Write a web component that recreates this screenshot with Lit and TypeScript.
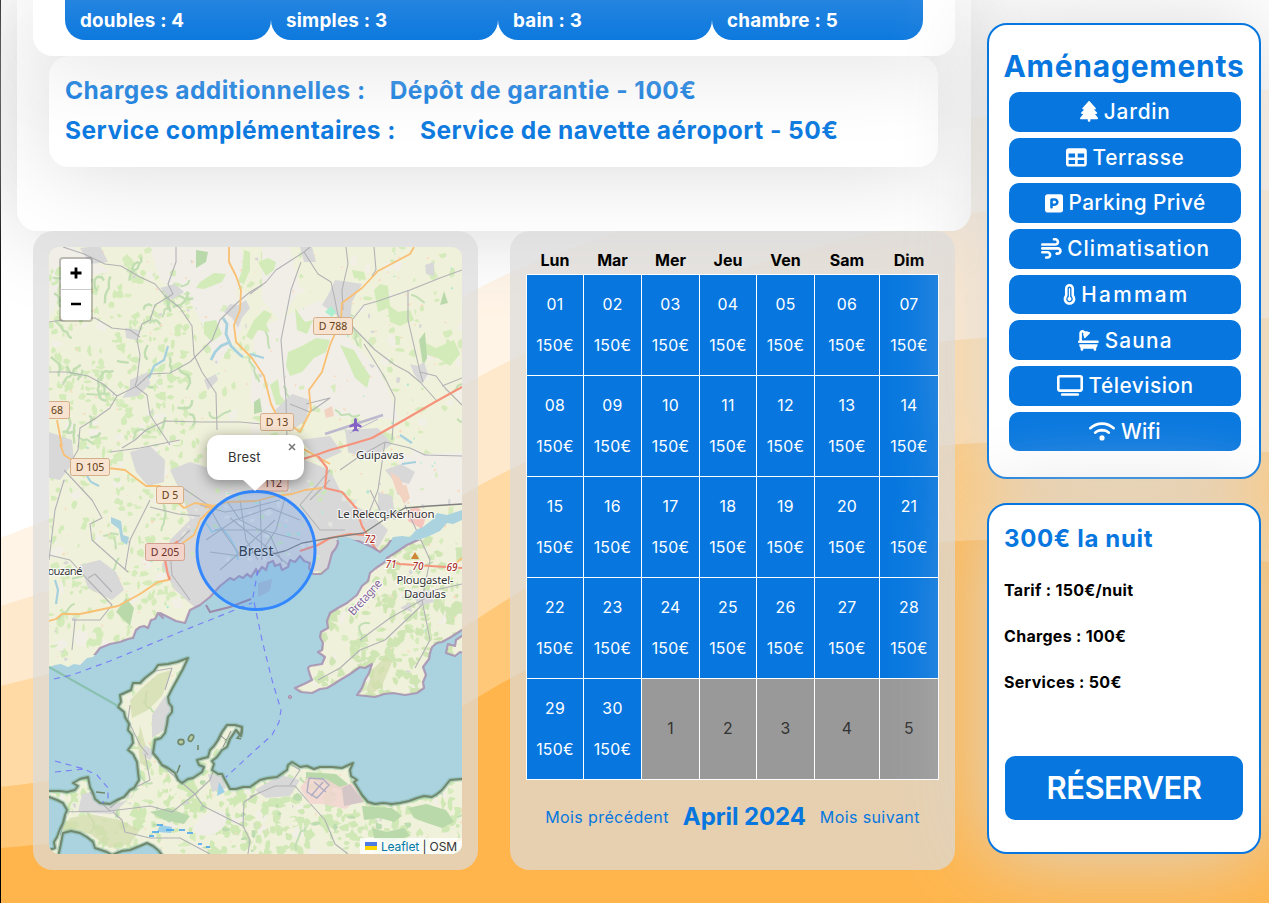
import { LitElement, html, svg, css } from "lit";
import { customElement, property } from "lit/decorators.js";

const ICONS: Record<string, [number, string]> = {
  tree: [448, "M210.6 5.9L62 169.4c-3.9 4.2-6 9.8-6 15.5C56 197.7 66.3 208 79.1 208H104L30.6 281.4c-4.2 4.2-6.6 10-6.6 16C24 309.9 34.1 320 46.6 320H80L5.4 409.5C1.9 413.7 0 419 0 424.5c0 13 10.5 23.5 23.5 23.5H192v32c0 17.7 14.3 32 32 32s32-14.3 32-32V448H424.5c13 0 23.5-10.5 23.5-23.5c0-5.5-1.9-10.8-5.4-15L368 320h33.4c12.5 0 22.6-10.1 22.6-22.6c0-6-2.4-11.8-6.6-16L344 208h24.9c12.7 0 23.1-10.3 23.1-23.1c0-5.7-2.1-11.3-6-15.5L237.4 5.9C234 2.1 229.1 0 224 0s-10 2.1-13.4 5.9z"],
  table: [512, "M64 256V160H224v96H64zm0 64H224v96H64V320zm224 96V320H448v96H288zM448 256H288V160H448v96zM64 32C28.7 32 0 60.7 0 96V416c0 35.3 28.7 64 64 64H448c35.3 0 64-28.7 64-64V96c0-35.3-28.7-64-64-64H64z"],
  parking: [448, "M64 32C28.7 32 0 60.7 0 96V416c0 35.3 28.7 64 64 64H384c35.3 0 64-28.7 64-64V96c0-35.3-28.7-64-64-64H64zM192 256h48c17.7 0 32-14.3 32-32s-14.3-32-32-32H192v64zm48 64H192v32c0 17.7-14.3 32-32 32s-32-14.3-32-32V288 168c0-22.1 17.9-40 40-40h72c53 0 96 43 96 96s-43 96-96 96z"],
  wind: [512, "M288 32c0 17.7 14.3 32 32 32h32c17.7 0 32 14.3 32 32s-14.3 32-32 32H32c-17.7 0-32 14.3-32 32s14.3 32 32 32H352c53 0 96-43 96-96s-43-96-96-96H320c-17.7 0-32 14.3-32 32zm64 352c0 17.7 14.3 32 32 32h32c53 0 96-43 96-96s-43-96-96-96H32c-17.7 0-32 14.3-32 32s14.3 32 32 32H416c17.7 0 32 14.3 32 32s-14.3 32-32 32H384c-17.7 0-32 14.3-32 32zM128 512h32c53 0 96-43 96-96s-43-96-96-96H32c-17.7 0-32 14.3-32 32s14.3 32 32 32H160c17.7 0 32 14.3 32 32s-14.3 32-32 32H128c-17.7 0-32 14.3-32 32s14.3 32 32 32z"],
  temp: [320, "M160 64c-26.5 0-48 21.5-48 48V276.5c0 17.3-7.1 31.9-15.3 42.5C86.2 332.6 80 349.5 80 368c0 44.2 35.8 80 80 80s80-35.8 80-80c0-18.5-6.2-35.4-16.7-48.9c-8.2-10.6-15.3-25.2-15.3-42.5V112c0-26.5-21.5-48-48-48zM48 112C48 50.2 98.1 0 160 0s112 50.1 112 112V276.5c0 .1 .1 .3 .2 .6c.2 .6 .8 1.6 1.7 2.8c18.9 24.4 30.1 55 30.1 88.1c0 79.5-64.5 144-144 144S16 447.5 16 368c0-33.2 11.2-63.8 30.1-88.1c.9-1.2 1.5-2.2 1.7-2.8c.1-.3 .2-.5 .2-.6V112zM208 368c0 26.5-21.5 48-48 48s-48-21.5-48-48c0-20.9 13.4-38.7 32-45.3V112c0-8.8 7.2-16 16-16s16 7.2 16 16V322.7c18.6 6.6 32 24.4 32 45.3z"],
  bath: [512, "M96 77.3c0-7.3 5.9-13.3 13.3-13.3c3.5 0 6.9 1.4 9.4 3.9l14.9 14.9C130 91.8 128 101.7 128 112c0 19.9 7.2 38 19.2 52c-5.3 9.2-4 21.1 3.8 29c9.4 9.4 24.6 9.4 33.9 0L289 89c9.4-9.4 9.4-24.6 0-33.9c-7.9-7.9-19.8-9.1-29-3.8C246 39.2 227.9 32 208 32c-10.3 0-20.2 2-29.2 5.5L163.9 22.6C149.4 8.1 129.7 0 109.3 0C66.6 0 32 34.6 32 77.3V256c-17.7 0-32 14.3-32 32s14.3 32 32 32H480c17.7 0 32-14.3 32-32s-14.3-32-32-32H96V77.3zM32 352v16c0 28.4 12.4 54 32 71.6V480c0 17.7 14.3 32 32 32s32-14.3 32-32V464H384v16c0 17.7 14.3 32 32 32s32-14.3 32-32V439.6c19.6-17.6 32-43.1 32-71.6V352H32z"],
  tv: [640, "M64 64V352H576V64H64zM0 64C0 28.7 28.7 0 64 0H576c35.3 0 64 28.7 64 64V352c0 35.3-28.7 64-64 64H64c-35.3 0-64-28.7-64-64V64zM128 448H512c17.7 0 32 14.3 32 32s-14.3 32-32 32H128c-17.7 0-32-14.3-32-32s14.3-32 32-32z"],
  wifi: [640, "M54.2 202.9C123.2 136.7 216.8 96 320 96s196.8 40.7 265.8 106.9c12.8 12.2 33 11.8 45.2-.9s11.8-33-.9-45.2C549.7 79.5 440.4 32 320 32S90.3 79.5 9.8 156.7C-2.9 169-3.3 189.2 8.9 202s32.5 13.2 45.2 .9zM320 256c56.8 0 108.6 21.1 148.2 56c13.3 11.7 33.5 10.4 45.2-2.8s10.4-33.5-2.8-45.2C459.8 219.2 393 192 320 192s-139.8 27.2-190.5 72c-13.3 11.7-14.5 31.9-2.8 45.2s31.9 14.5 45.2 2.8c39.5-34.9 91.3-56 148.2-56zm64 160a64 64 0 1 0 -128 0 64 64 0 1 0 128 0z"],
};

const PLANE = "M482.3 192c34.2 0 93.7 29 93.7 64c0 36-59.5 64-93.7 64l-116.6 0L265.2 495.9c-5.7 10-16.3 16.1-27.8 16.1l-56.2 0c-10.6 0-18.3-10.2-15.4-20.4l49-171.6L112 320 68.8 377.6c-3 4-7.8 6.4-12.8 6.4l-42 0c-7.8 0-14-6.3-14-14c0-1.3 .2-2.6 .5-3.9L32 256 .5 145.9c-.4-1.3-.5-2.6-.5-3.9c0-7.8 6.3-14 14-14l42 0c5 0 9.8 2.4 12.8 6.4L112 192l102.9 0-49-171.6C162.9 10.2 170.6 0 181.2 0l56.2 0c11.5 0 22.1 6.2 27.8 16.1L365.7 192l116.6 0z";

/* ---------- terrain texture ---------- */

function seeded(seed: number) {
  let s = seed;
  return () => {
    s = (s * 1664525 + 1013904223) % 4294967296;
    return s / 4294967296;
  };
}

type Box = [number, number, number, number];

// Scatters small irregular parcels inside a box and returns them as one path.
function parcels(seed: number, count: number, size: number, [x0, y0, x1, y1]: Box): string {
  const r = seeded(seed);
  let d = "";
  for (let i = 0; i < count; i++) {
    const cx = x0 + r() * (x1 - x0);
    const cy = y0 + r() * (y1 - y0);
    const n = 5 + Math.floor(r() * 4);
    const sx = size * (0.4 + r());
    const sy = size * (0.4 + r());
    for (let k = 0; k < n; k++) {
      const a = (k / n) * Math.PI * 2;
      const m = 0.45 + r() * 0.75;
      d += `${k ? "L" : "M"}${(cx + Math.cos(a) * sx * m).toFixed(1)} ${(cy + Math.sin(a) * sy * m).toFixed(1)}`;
    }
    d += "z";
  }
  return d;
}

// Winding hedgerow-like strips of woodland.
function strips(seed: number, count: number, [x0, y0, x1, y1]: Box): string {
  const r = seeded(seed);
  let d = "";
  for (let i = 0; i < count; i++) {
    let x = x0 + r() * (x1 - x0);
    let y = y0 + r() * (y1 - y0);
    let a = r() * 6.28;
    d += `M${x.toFixed(1)} ${y.toFixed(1)}`;
    const n = 3 + Math.floor(r() * 5);
    for (let k = 0; k < n; k++) {
      a += (r() - 0.5) * 1.8;
      x += Math.cos(a) * 4;
      y += Math.sin(a) * 4;
      d += `L${x.toFixed(1)} ${y.toFixed(1)}`;
    }
  }
  return d;
}

const ALL: Box = [49, 247, 462, 854];
const NORTHWEST: Box = [49, 270, 190, 440];
const WEST: Box = [49, 440, 200, 660];
const SOUTH: Box = [49, 740, 462, 854];
const EAST: Box = [320, 540, 462, 700];
const CITY: Box = [180, 470, 370, 560];

const SEA =
  "M40 667L49 667 55 665 61 664 68 667 74 664 80 665 87 658 93 657 100 648 110 644 120 642 128 639 133 638 136 630 140 627 144 626 148 628 151 620 155 619 158 613 163 618 160 613 168 617 176 621 185 623 188 615 190 610 200 605 210 597 220 586 230 578 234 580 239 576 243 578 247 574 251 577 256 569 257 574 262 567 266 570 268 563 273 561 275 566 280 564 282 570 288 567 290 560 295 562 300 556 304 561 310 563 309 568 313 574 321 574 328 568 332 553 336 548 338 543 337 538 347 537 356 540 363 543 372 547 380 552 387 546 393 537 402 536 410 537 416 530 423 527 432 520 437 513 447 515 462 510 470 510 470 520 462 520 453 524 447 523 440 531 427 537 418 540 407 545 395 553 387 558 385 562 376 568 370 573 368 581 362 586 357 595 347 603 338 608 330 613 327 621 328 628 321 632 320 637 323 643 322 650 318 652 325 657 322 664 310 666 308 668 310 675 312 680 304 684 295 688 301 692 312 693 320 689 327 688 334 684 340 680 350 674 360 667 365 668 372 664 369 673 365 680 362 688 357 695 366 696 375 697 384 694 393 693 405 695 417 693 424 688 423 682 426 675 423 667 429 659 430 653 432 647 437 643 442 642 451 637 462 630 470 630 470 638 462 636 456 640 455 646 448 644 446 653 455 656 460 652 470 655 470 779 462 779 450 780 442 790 437 794 432 797 424 796 417 798 409 801 400 803 392 804 383 803 375 804 368 802 362 795 357 787 354 782 357 780 351 776 350 770 353 763 342 768 332 767 320 767 314 769 307 766 300 767 292 762 288 765 287 770 277 777 268 778 260 780 250 787 243 787 236 789 230 789 225 780 222 774 218 774 212 770 214 764 212 761 217 757 222 750 227 747 230 739 236 730 241 736 242 727 235 725 227 725 222 732 218 740 214 746 210 750 208 757 197 760 199 765 204 767 202 772 193 778 188 779 182 783 178 780 175 773 168 768 162 765 158 759 153 753 155 740 161 738 165 733 167 724 168 717 172 712 172 707 169 703 168 697 172 689 178 678 183 669 188 658 177 662 168 664 158 665 154 671 145 678 140 683 133 683 131 690 120 695 121 702 118 707 124 712 125 717 129 724 128 730 132 735 133 743 128 750 133 754 137 762 138 772 139 780 134 788 130 790 124 797 117 800 110 804 100 803 95 799 93 793 90 787 88 777 80 779 73 783 78 786 75 790 67 792 60 791 49 791 40 791z";
const BAY_W = "M40 798L49 797 57 800 63 803 67 810 65 815 63 823 60 829 57 837 54 842 55 848 49 850 40 850z";
const BAY_S = "M57 862L60 848 63 833 71 831 80 833 87 837 93 842 95 848 107 852 112 855 122 851 130 850 140 846 147 843 153 846 158 850 166 860z";

const URBAN = [
  "M170 470L190 462 215 470 235 462 262 472 300 458 330 470 345 500 372 515 388 530 378 548 340 540 330 570 280 575 240 588 200 612 175 590 162 566 170 540 190 520 182 495z",
  "M80 248L100 246 108 262 90 264z", "M160 288L175 284 184 292 172 300z", "M125 328L140 330 136 340 126 338z",
  "M224 312L230 304 238 305 246 300 250 308 242 318 238 328 232 318z", "M130 380L148 372 150 384 138 396 122 398 130 388z", "M204 380L216 374 218 380 208 390z",
  "M328 295L335 280 350 282 362 284 352 302 350 322 338 316 322 305z", "M300 247L312 247 316 262 304 262z", "M425 265L434 262 434 276 426 274z",
  "M410 364L418 366 424 362 428 374 422 384 414 374z", "M275 410L292 394 310 400 306 420 290 432 276 424z",
  "M49 432L72 440 74 462 60 480 49 478z", "M130 452L150 446 165 460 164 482 148 486 136 472z", "M80 565L100 560 116 572 124 590 112 600 88 588z",
  "M345 430L378 428 392 444 370 460 348 452z", "M300 440L330 436 342 452 320 462z", "M378 492L392 496 396 520 378 516z", "M410 592L430 590 434 602 420 606z",
  "M255 790L280 775 300 780 290 796 266 798z", "M82 794L92 792 106 806 128 800 112 814 78 812z", "M152 715L165 696 172 706 164 730 152 738z",
  "M208 774L222 776 226 788 212 792z", "M145 745L155 752 150 760 142 754z", "M400 608L410 602 412 612z M385 470l16 -6 14 8 -6 12 -16 -4z",
];

const HEATH = [
  "M50 247H74L96 262 110 272 66 280 49 320z", "M150 247H240L250 270 236 292 242 330 216 366 205 330 190 300 160 280z",
  "M255 330L320 300 350 340 380 370 400 420 330 416 300 395 270 430 250 400z", "M262 247L290 247 300 290 280 320 262 300z",
  "M398 455L462 452 462 505 405 505z",
];

const GRASS = [
  "M200 282l14-9 12 1-4 8-10 4-8 3-8-1z", "M254 320l10-10 8 4-6 10 4 8-12-2-6 10-6-4z", "M258 262l10-4 8 4-2 8-8 6z",
  "M374 290l6-6 8 2 2 20 8 6 12-2 4 10-14 6-10-4-2-14-10 4z", "M340 345l14 5 8 14 8 12-3 12-12-10-8-18z",
  "M288 352l14-6 14-8 14 2-4 12-12 6-12 14-12 4-4-10z", "M270 385l8-6 2 16 8 10-12 0z", "M204 322l12-2 6 14-10 8-8-8z",
  "M352 270l12 2 2 8-12-2z", "M244 250l6 2 0 18-6 14-6-2 4-12z", "M420 340l16 8 18-8 6 14-10 12-12-8-14-4z", "M295 308l10 14 8-2-6 14-10-4z",
];

const FOREST = [
  "M196 250l12 2-2 10-10 6z", "M254 402l6-4 2 14-8 2z", "M419 340l6-8 2 26-4 8z", "M150 812l18-4 22 8-6 8-20-4z", "M362 806l30 2 10 8-8 6-14-4-16 2z",
  "M408 808l18-4 20 6 8 12-12 6-18-6-10-4z", "M372 828l14 4 18-4 6 8-20 6-16-4z",
  "M306 772l30 2 12 10-6 6-18-6-18-6z", "M116 612l10-14 8 10-4 18z", "M440 305l4-14 4 12z", "M300 404l8 4-4 18-4-6z",
];

const RESERVE = [
  "M130 700l14-14 14-12 14-4-10 26-14 14-16 8z", "M140 725l6 22 0 20-6-4-2-20z", "M366 690l8-22 12-12 6 6-10 24-10 8z",
  "M60 830l10-12 20-4 30 6 20 10-10 14-20 4-20-14z", "M330 600l12-18 16-14-2 14-14 18z",
];

const ROADS_MINOR = [
  "M63 247L84 254 105 264 121 266 140 277 155 284 165 296 180 308 192 326 194 355 202 372 216 393 217 430",
  "M176 247L176 262 168 284 173 294 155 305 150 320 142 324 137 340 140 355 137 380 135 386",
  "M49 372L67 372 88 376 103 384 117 396", "M117 396L137 386 150 374 170 373 190 362 212 340 220 320 238 302 250 292 262 285",
  "M49 322L75 318 95 318 112 328 130 330 140 337", "M135 386L147 395 150 415 160 430 170 445",
  "M117 396L110 408 96 418 80 428 78 450 72 460", "M122 448L135 440 146 430 165 421 200 422 240 422 262 424",
  "M250 294L266 282 276 270 304 252 310 247", "M304 252L318 274 331 282 335 300 338 316 350 324 375 350 395 365 408 372 420 382 436 400",
  "M301 262L291 290 281 340 286 400 287 440", "M346 247L348 264 342 290 343 310", "M352 320L364 305 378 301 410 290 440 278 462 270",
  "M374 247L376 270 372 276", "M408 290L408 320 420 372 423 382", "M364 344L385 378 395 398 392 440",
  "M420 372L436 376 445 388 462 405", "M306 404L330 398 310 412 290 404", "M442 386L462 378",
  "M64 480L55 510 49 560", "M64 470L92 500 102 518 90 524 92 540 120 565 128 572", "M110 452L140 448 180 440",
  "M150 500L130 540 125 570M150 507L178 514 200 516", "M49 555L70 560 88 580 112 605 100 620 72 620M75 620L72 650",
  "M88 578L95 574 112 592", "M340 470L360 456 385 442 410 448 425 455 462 456M385 442L378 490 366 520",
  "M405 505L430 560 422 600M422 600L390 618 360 640M422 600L435 590 462 584M422 600L430 640 415 668",
  "M318 680L340 668 360 650 385 640 422 605", "M60 812L110 811 150 806 172 812 195 794",
  "M145 754L150 780 130 790 110 808M158 762L195 794 210 780 216 764M195 794L203 806 235 822 243 826 250 840 248 854",
  "M113 812L122 820 125 832 150 838 180 838 210 854M110 811L90 792M66 816L60 835",
  "M250 797L275 786 295 786 307 800 325 820 335 844 348 854M290 785L300 770 290 764M243 826L244 802 260 792",
  "M130 705L128 720 140 745 148 755M150 672L172 668 165 690",
  "M183 488L208 505 222 530 240 555M190 530L170 550 172 575 190 600M200 505L225 512 250 508 280 500",
  "M260 500L262 560M240 500L246 540 258 560M285 498L276 530 264 548M300 540L262 530 215 530M230 518L258 540 290 566M210 552L240 556 262 550",
  "M206 540L235 520 270 508 300 520M220 570L245 548 275 520M282 562L270 535 240 520 225 498",
  "M330 470L300 505 320 530 345 530M310 500L330 480M370 490L380 510",
];
const ROADS_ORANGE = [
  "M229 247L229 262 236 276 241 290 240 310 234 325 236 342 252 358 264 376 271 404 284 430",
  "M414 247L410 254 395 262 378 271 362 288 342 303 341 320 330 345 322 372 309 390 311 410 300 432 284 420",
  "M49 621L56 619 62 614 80 614 118 606 140 594 158 582 168 580 170 576", "M60 444L64 455 72 460M57 420L62 447",
  "M108 468L125 470 146 486 160 486 175 500 184 508 195 503 214 506 200 520 194 535 180 545 170 550",
  "M205 508L228 502 256 501 275 496 292 494 305 490 322 488", "M300 447L330 464", "M440 845L462 839M454 565L462 558",
];
const ROADS_RED = [
  "M462 387L435 402 404 420 372 438 352 444 330 450 316 455 300 460", "M318 456L327 468 325 488 342 492 356 508 362 526 375 548 386 561 400 564 430 566 462 568",
  "M170 552L165 560 168 575 170 580M170 547L178 541", "M300 551L318 545 330 538 350 534 364 535",
];

const SHIELDS: [string, number, number, number, number][] = [
  ["D 788", 333, 326, 38, 0], ["D 13", 277, 422, 32, 0], ["D 105", 90, 467, 38, 0], ["D 5", 170, 495, 26, 0], ["D 205", 165, 552, 38, 1], ["68", 57, 410, 24, 0],
];

@customElement("osm-map")
class OsmMap extends LitElement {
  static styles = css`
    :host { display: block; position: relative; width: 413px; height: 607px; border-radius: 10px; overflow: hidden; font-family: Inter, sans-serif; }
    svg { display: block; }
    .zoom { position: absolute; top: 10px; left: 10px; width: 30px; border: 2px solid rgba(0,0,0,.22); border-radius: 4px; background: #fff; background-clip: padding-box; }
    .zoom button { display: grid; place-items: center; width: 30px; height: 30px; padding: 0 0 2px; border: 0; background: none; }
    .zoom button + button { border-top: 1px solid #ccc; height: 31px; }
    .popup { position: absolute; left: 158px; top: 188px; width: 97px; height: 45px; border-radius: 12px; background: #fff; box-shadow: 0 3px 14px rgba(0,0,0,.4); font-size: 13px; line-height: 44px; color: #333; }
    .popup span { padding-left: 21px; letter-spacing: .15px; }
    .tip { position: absolute; left: 35px; top: 44px; width: 26px; height: 12px; background: #fff; clip-path: polygon(0 0, 100% 0, 50% 100%); }
    .close { position: absolute; right: 8px; top: 8px; width: 8px; height: 8px; }
    .credit { position: absolute; right: 0; bottom: 0; display: flex; align-items: center; height: 16px; padding: 0 5px; background: rgba(255,255,255,.8); font-size: 12px; color: #333; white-space: pre; letter-spacing: -.1px; }
    .credit a { color: #0078a8; }
    .flag { width: 12px; height: 8px; margin-right: 4px; background: linear-gradient(#4c7be1 50%, #ffd500 50%); }
  `;

  render() {
    const road = (d: string) => svg`<path d=${d}/>`;
    return html`
      <svg width="413" height="607" viewBox="49 247 413 607">
        <rect x="49" y="247" width="413" height="607" fill="#f0f1da"/>
        <path d=${parcels(11, 200, 6, ALL)} fill="#f2efe6"/>
        <path d=${parcels(7, 380, 4.5, ALL)} fill="#d5ebbb"/>
        <g fill="#f1eee8">${HEATH.map(road)}</g>
        <path d=${parcels(8, 120, 3.5, ALL)} fill="#d8ecc0"/>
        <path d=${parcels(21, 190, 4, NORTHWEST)} fill="#d3eab9"/>
        <path d=${parcels(23, 160, 4, WEST)} fill="#d3eab9"/>
        <path d=${parcels(25, 420, 5.5, SOUTH)} fill="#cfe8b5"/>
        <path d=${parcels(27, 240, 5, EAST)} fill="#cfe6b4"/>
        <path d=${parcels(29, 170, 4, SOUTH)} fill="#f1f1dc"/>
        <path d=${strips(5, 50, ALL)} fill="none" stroke="#c2dfb4" stroke-width="2"/>
        <path d=${strips(9, 34, NORTHWEST)} fill="none" stroke="#c0deb2" stroke-width="2.4"/>
        <path d=${parcels(31, 50, 4, SOUTH)} fill="#bddcb0"/>
        <path d=${parcels(33, 90, 2.2, ALL)} fill="#d7d7d7"/>
        <path d=${parcels(35, 330, 1.4, ALL)} fill="#f7dcc3"/>
        <path d=${parcels(37, 45, 1.3, ALL)} fill="#b0e8d0"/>
        <g fill="#d2ebb8">${GRASS.map(road)}</g>
        <g fill="#b9d9ab">${FOREST.map(road)}</g>
        <g fill="#d3ddae" opacity=".75">${RESERVE.map(road)}</g>
        <path d="M196 833c-8-6 8-22 22-22 10 0 10 8 6 15-6 9-20 13-28 7z" fill="#f1eee8"/>
        <g fill="#d8d8d8">${URBAN.map(road)}</g>
        <path d=${parcels(41, 45, 3, CITY)} fill="#e3e3df"/>
        <path d=${parcels(43, 34, 2.6, CITY)} fill="#cbe6b8"/>
        <path d=${parcels(45, 20, 2, CITY)} fill="#b4e6d2"/>
        <path d="M325 312l6-6 5 6-4 5z" fill="#abeed0"/>
        <g fill="#f2d3c2"><path d="M324 410l8-4 2 10-8 2zM390 472l10 6 8 18-4 6-8-12zM398 490l8-6 4 14-6 6z"/></g>
        <path d="M406 510l12-3 8 10-4 12-14-8z" fill="#f5c4bc"/>
        <g fill="none" stroke="#a5d1df" stroke-width="2.2">
          <path d="M149 378l5-12 10-6 4-14"/><path d="M223 318l4 6-1 10 5 12 8 8 4 3M230 342l-9 4-6 6-4 8" stroke-width="2.8"/>
          <path d="M250 354l14 4M87 476l4 6 8 4M55 580l3 10-2 14M400 435l12 8M402 464l14-2"/>
          <path d="M204 520l8 12 10-4 8 10 6 12 2 10" stroke-width="1.6"/>
        </g>
        <path d="M111 517l10 4 2 14 6 2-2 8-6-4-2-12-8-6z" fill="#aad3df"/>
        <path d="M160 825l12 2-1 6-14-1zM219 782l6 10-8 4z" fill="#9ccfe8"/>
        <g fill="none" stroke="#b2b2b6" stroke-width="1.1" stroke-linejoin="round">${ROADS_MINOR.map(road)}</g>
        <path d="M325 434l58-19" stroke="#bcb9cf" stroke-width="2.5"/><path d="M350 433l28-14" stroke="#bcb9cf"/>
        <g fill="none" stroke="#f9bf73" stroke-width="1.8" stroke-linejoin="round">${ROADS_ORANGE.map(road)}</g>
        <g fill="none" stroke="#f6937c" stroke-width="2.1" stroke-linejoin="round">${ROADS_RED.map(road)}</g>
        <path d="M269 555L285 551 302 543 330 538 364 533 385 519 405 508 430 506 462 504" fill="none" stroke="#808080" stroke-width="1.3"/>
        <path d="M300 788l8-11 18 2 14 8 12-4 12 18-10 1-8 7-24-5-12 0z" fill="#f2d5d0" opacity=".85"/>
        <path d="M342 788l8-4 14 18-20 4z" fill="#d4c6c6"/>
        <path d="M307 792l2-14 14 1 6 6-12 13zM311 796l12-14M314 782l12 10" fill="none" stroke="#adaec4" stroke-width="1.4"/>

        <clipPath id="pink"><path d="M49 540H470V745H190V655H49z"/></clipPath>
        <clipPath id="green"><path d="M49 676H190V745H470V854H49z M120 655h72v30h-72z M190 715h56v40h-56z"/></clipPath>
        <path d=${SEA} fill="#aad3df"/><path d=${BAY_W + BAY_S} fill="#aad3df"/>
        <path d=${SEA} fill="none" stroke="#a78fb0" stroke-width="2.2" stroke-linejoin="round" opacity=".85" clip-path="url(#pink)"/>
        <g clip-path="url(#green)" fill="none" stroke-linejoin="round">
          <path d=${SEA + BAY_W + BAY_S} stroke="#7db4a4" stroke-width="4.6" opacity=".5"/>
          <path d=${SEA + BAY_W + BAY_S} stroke="#71876c" stroke-width="2"/>
        </g>
        <path d="M206 605l4 7 20-5 21-8" fill="none" stroke="#9b8aab" stroke-width="2"/>
        <path d="M223 747l8-16M221 736l5 4" stroke="#888" fill="none"/>
        <g fill="#b7cda0" stroke="#71876c" stroke-width="1.6">
          <ellipse cx="181" cy="742" rx="3" ry="2.6"/><ellipse cx="191" cy="738" rx="2.2" ry="3.6" transform="rotate(30 191 738)"/>
          <path d="M198 745v5M180 765l-3 8"/><path d="M96 792l9 1M242 727v6l-5 5 4 1" fill="none"/>
        </g>
        <circle cx="290" cy="697" r="1.6" fill="#bfa9bf" stroke="#a78fb0"/>
        <path d="M49 667L118 706" stroke="#85bfa9" stroke-width="2.2" opacity=".85"/>
        <path d="M258 583l14-4-2 12-12 6z" fill="#a9bdd0"/>
        <g fill="none" stroke="#7b82f4" stroke-width="1.2" stroke-dasharray="6 5">
          <path d="M54 679L72 675 110 661 180 632 252 603M258 570L253 597 262 640 272 680 281 710 279 722 272 735 252 753 226 777M55 761L84 769 97 775 108 788 108 798 102 803M55 772L84 769"/>
        </g>
        <path d="M152 832h7M157 825h6M166 830h8M179 830h6M187 833h6M198 844h4M206 847h4M149 836h5" stroke="#3b9ff0" stroke-width="1.3"/>
        <path d="M411 559l4-7 4 7z" fill="#d08437"/>
        <g transform="translate(349.5 431.5) rotate(-90) scale(.0235)"><path d=${PLANE} fill="#8461c4"/></g>

        <g font-family="'Noto Sans', sans-serif" text-anchor="middle">
          <g font-size="10.5">
            ${SHIELDS.map(([t, x, y, w, red]) => svg`
              <rect x=${x - w / 2 - .5} y=${y - 8.5} width=${w + 1} height="17" rx="2" fill=${red ? "#f3d4cb" : "#f7e3cf"} stroke=${red ? "#d5a08f" : "#d3ae88"}/>
              <text x=${x} y=${y + 4} fill=${red ? "#6e2f26" : "#644016"}>${t}</text>`)}
            <rect x="253" y="474" width="35" height="17" rx="2" fill="#f3d4cb" stroke="#d5a08f"/>
            <text x="273" y="487" fill="#6e2f26">112</text>
          </g>
          <g font-size="11.5" fill="#333" stroke="#fff" stroke-opacity=".75" stroke-width="2.4" paint-order="stroke" stroke-linejoin="round">
            <text x="380" y="458.5" textLength="48">Guipavas</text>
            <text x="386" y="518" textLength="97">Le Relecq-Kerhuon</text>
            <text x="425" y="584" textLength="57">Plougastel-</text>
            <text x="425" y="598" textLength="42">Daoulas</text>
            <text x="65" y="574.5" textLength="35">ouzané</text>
            <text x="256" y="556" font-size="14" textLength="35" stroke-opacity=".3">Brest</text>
            <text transform="translate(368 600) rotate(-48)" textLength="44" fill="#85669a">Bretagne</text>
          </g>
          <g font-size="10" font-style="italic" font-weight="500" fill="#a8322b" stroke="#fff" stroke-width="2" paint-order="stroke">
            <text x="370" y="543">72</text><text x="391" y="568">71</text><text x="418" y="570">70</text><text x="452" y="571">69</text>
          </g>
        </g>
        <circle cx="256" cy="550.5" r="59" fill="#3388ff" fill-opacity=".2" stroke="#3388ff" stroke-width="3"/>
      </svg>
      <div class="zoom">
        <button aria-label="Zoom in"><svg width="12" height="12"><path d="M.5 6h11M6 .5v11" stroke="#000" stroke-width="2.8"/></svg></button>
        <button aria-label="Zoom out"><svg width="12" height="12"><path d="M1 6h10" stroke="#000" stroke-width="2.6"/></svg></button>
      </div>
      <div class="popup"><span>Brest</span><div class="tip"></div>
        <svg class="close" viewBox="0 0 8 8"><path d="M1 1l6 6M7 1l-6 6" stroke="#757575" stroke-width="1.5"/></svg>
      </div>
      <div class="credit"><i class="flag"></i><a>Leaflet</a> | OSM</div>
    `;
  }
}

@customElement("amenity-pill")
class AmenityPill extends LitElement {
  @property() icon = "tree";
  @property() label = "";
  @property({ type: Number }) spacing = 0;
  static styles = css`
    :host { display: flex; align-items: center; justify-content: center; gap: 5.5px; border-radius: 10px; background: #0777df; color: #fff; font: 450 20.8px/1 Inter, sans-serif; white-space: nowrap; }
    svg { height: 20.8px; display: block; fill: currentColor; }
    span { padding-top: 1.5px; }
  `;
  render() {
    const [w, d] = ICONS[this.icon];
    return html`<svg viewBox="0 0 ${w} 512" width=${(w / 512) * 20.8}><path d=${d}/></svg><span style="letter-spacing:${this.spacing}px;margin-right:${-this.spacing}px">${this.label}</span>`;
  }
}

const AMENITIES: [string, string, number][] = [
  ["tree", "Jardin", 0.8], ["table", "Terrasse", 0.6], ["parking", "Parking Privé", 0.4], ["wind", "Climatisation", 1.1],
  ["temp", "Hammam", 2.3], ["bath", "Sauna", 1.2], ["tv", "Télevision", 0.5], ["wifi", "Wifi", 0.1],
];

@customElement("app-root")
class AppRoot extends LitElement {
  static styles = css`
    :host { display: grid; width: 1269px; height: 903px; overflow: hidden; font-family: Inter, sans-serif; font-size: 16px; color: #000; background: #fff; --blue: #0777df; --glow: 0 0 90px #d9d9d9; }
    * { box-sizing: border-box; }
    h2, h3, p { margin: 0; }
    .backdrop, .page { grid-area: 1 / 1; display: flex; }
    .page { padding-left: 16px; gap: 16px; border-left: 1px solid #000; height: 903px; isolation: isolate; }
    .left { width: 954px; height: 870px; }
    .main { height: 231px; background: #fff; border-radius: 0 0 20px 20px; box-shadow: var(--glow); padding: 0 16px; isolation: isolate; }
    .rooms { position: relative; z-index: 1; height: 56px; padding: 0 32px 16px; border-radius: 0 0 20px 20px; background: #fff; box-shadow: var(--glow); display: grid; grid-template-columns: 206px 227px 214px 211px; }
    .rooms div { height: 40px; border-radius: 0 0 20px 20px; background: linear-gradient(#2484e0, #0d79de); color: #fff; font-weight: 700; font-size: 18.8px; line-height: 42px; padding-left: 15px; letter-spacing: .25px; }
    .fees { margin: 0 17px 0 16px; height: 111px; padding: 14px 16px; border-radius: 20px; background: #fff; box-shadow: var(--glow); }
    .fees p { display: flex; gap: 24px; height: 40px; line-height: 40px; font-size: 24.5px; letter-spacing: .46px; font-weight: 700; color: var(--blue); white-space: nowrap; }
    .row { position: relative; z-index: 1; display: flex; gap: 32px; padding: 0 16px; }
    .card { width: 445px; height: 639px; padding: 16px; border-radius: 20px; background: rgba(220,220,220,.7); }
    .week, .days { display: grid; grid-template-columns: 56px 57px 57px 56px 57px 64px 58px; column-gap: 1px; }
    .week { height: 27px; line-height: 27px; padding: 0 1px; font-weight: 700; text-align: center; font-size: 16px; }
    .days { width: 413px; grid-auto-rows: 100px; gap: 1px; padding: 1px; background: #fff; }
    .day { display: flex; flex-direction: column; align-items: center; justify-content: center; gap: 17px; line-height: 24px; background: var(--blue); color: #fff; font-size: 15.8px; letter-spacing: .3px; }
    .off { background: #999; color: #333; }
    .nav { display: flex; justify-content: center; align-items: center; gap: 14px; height: 73px; color: var(--blue); white-space: nowrap; letter-spacing: .4px; }
    .nav h2 { font-size: 24px; letter-spacing: -.1px; }
    aside { position: relative; z-index: 2; width: 274px; padding-top: 23px; display: flex; flex-direction: column; gap: 24px; }
    .side { border: 2px solid var(--blue); border-radius: 20px; background: #fff; box-shadow: var(--glow); white-space: nowrap; }
    .amen { height: 456px; padding: 17px 18px 0 20px; }
    .amen h2 { height: 50px; line-height: 48px; margin: 0 -14px 0 -16px; text-align: center; font-size: 30px; letter-spacing: .75px; color: var(--blue); }
    .pills { display: grid; grid-auto-rows: 39.5px; gap: 6.2px; }
    .price { height: 351px; padding: 16px 15px; }
    .price h2 { font-size: 24px; line-height: 36px; height: 46px; letter-spacing: .65px; color: var(--blue); }
    .price p { font-weight: 700; font-size: 16px; line-height: 46px; letter-spacing: .3px; }
    .price p:last-of-type { margin-bottom: 51px; }
    .reserve { display: block; width: 238px; height: 64px; margin-left: 1px; border: 0; border-radius: 10px; background: var(--blue); color: #fff; font: 600 31px/64px Inter, sans-serif; letter-spacing: -.5px; padding: 0; }
  `;

  render() {
    const days = Array.from({ length: 30 }, (_, i) => String(i + 1).padStart(2, "0"));
    return html`
      <svg class="backdrop" width="1269" height="903">
        <path fill="#fff4e6" d="M0 538C130 490 300 400 400 336C450 302 490 280 540 260C700 200 850 150 970 119C1080 92 1180 86 1269 90V903H0z"/>
        <path fill="#ffe9cd" d="M0 606C160 560 320 470 480 376C640 290 820 240 975 213C1080 195 1180 188 1269 190V903H0z"/>
        <path fill="#ffdaa5" d="M0 686C160 650 320 580 480 485C640 400 820 350 980 338C1080 330 1180 325 1269 318V903H0z"/>
        <path fill="#ffc878" d="M0 787C160 770 330 710 480 617C640 510 820 450 980 443C1080 438 1180 448 1269 452V903H0z"/>
        <path fill="#ffb54b" d="M0 848C180 835 340 775 480 696C640 600 820 545 980 540C1080 538 1180 550 1269 562V903H0z"/>
      </svg>
      <div class="page">
        <div class="left">
          <section class="main">
            <div class="rooms"><div>doubles : 4</div><div>simples : 3</div><div>bain : 3</div><div>chambre : 5</div></div>
            <div class="fees">
              <p><span>Charges additionnelles :</span><span>Dépôt de garantie - 100€</span></p>
              <p><span>Service complémentaires :</span><span>Service de navette aéroport - 50€</span></p>
            </div>
          </section>
          <div class="row">
            <div class="card"><osm-map></osm-map></div>
            <div class="card">
              <div class="week">${["Lun", "Mar", "Mer", "Jeu", "Ven", "Sam", "Dim"].map((d) => html`<span>${d}</span>`)}</div>
              <div class="days">
                ${days.map((d) => html`<div class="day"><span>${d}</span><span>150€</span></div>`)}
                ${[1, 2, 3, 4, 5].map((d) => html`<div class="day off">${d}</div>`)}
              </div>
              <div class="nav"><span>Mois précédent</span><h2>April 2024</h2><span>Mois suivant</span></div>
            </div>
          </div>
        </div>
        <aside>
          <section class="side amen">
            <h2>Aménagements</h2>
            <div class="pills">
              ${AMENITIES.map(([i, l, s]) => html`<amenity-pill icon=${i} label=${l} spacing=${s}></amenity-pill>`)}
            </div>
          </section>
          <section class="side price">
            <h2>300€ la nuit</h2>
            <p>Tarif : 150€/nuit</p><p>Charges : 100€</p><p>Services : 50€</p>
            <button class="reserve">RÉSERVER</button>
          </section>
        </aside>
      </div>
    `;
  }
}
